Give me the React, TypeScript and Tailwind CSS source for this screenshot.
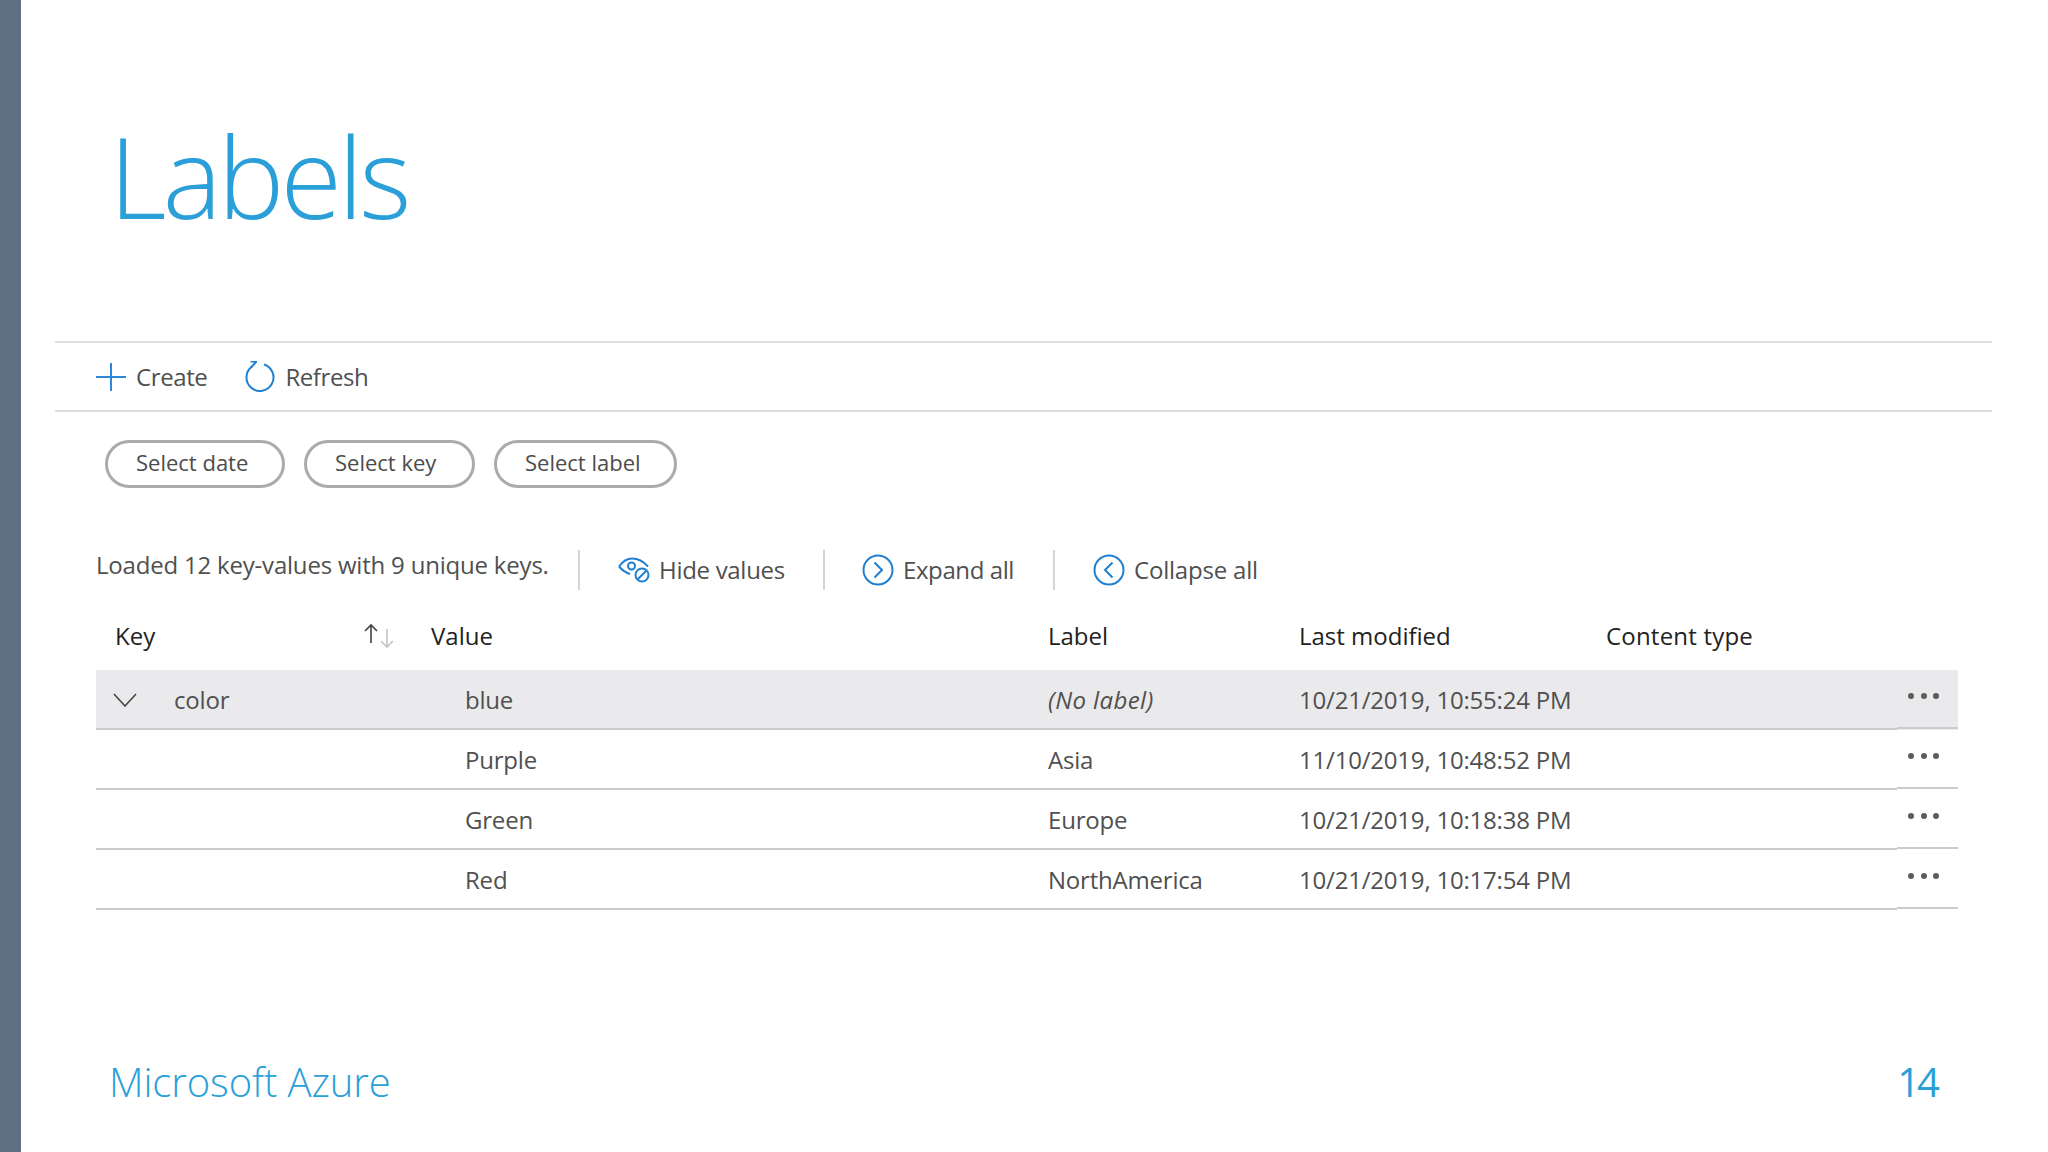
const font = "font-['Open_Sans','Liberation_Sans',sans-serif]"

type Row = {
  value: string
  label: string
  modified: string
}

const rows: Row[] = [
  { value: 'blue', label: '(No label)', modified: '10/21/2019, 10:55:24 PM' },
  { value: 'Purple', label: 'Asia', modified: '11/10/2019, 10:48:52 PM' },
  { value: 'Green', label: 'Europe', modified: '10/21/2019, 10:18:38 PM' },
  { value: 'Red', label: 'NorthAmerica', modified: '10/21/2019, 10:17:54 PM' },
]

function PlusIcon() {
  return (
    <svg width="30" height="30" viewBox="0 0 30 30" fill="none" stroke="#2b88d8" strokeWidth="2">
      <path d="M0 15H30M15 1V29" />
    </svg>
  )
}

function RefreshIcon() {
  return (
    <svg width="32" height="32" viewBox="0 0 32 32" fill="none" stroke="#1f7fd0" strokeWidth="2">
      <path d="M20 3.5A13.5 13.5 0 1 1 8 5.5" />
      <path d="M6.5 0.5H13M12.5 0.5L7 6.5" />
    </svg>
  )
}

function HideIcon() {
  return (
    <svg width="32" height="26" viewBox="0 0 32 26" fill="none" stroke="#1f7fd0" strokeWidth="2">
      <path d="M1 9.5C5 4 9.5 1.5 14 1.5C20 1.5 26 5 30 9.5" />
      <path d="M1 9.5C4 13 7.5 15.5 12 17" />
      <circle cx="13.5" cy="9" r="3.5" />
      <circle cx="24" cy="18" r="6.5" />
      <path d="M19.5 22.5L28.5 13.5" />
    </svg>
  )
}

function CircleChevron({ dir }: { dir: 'left' | 'right' }) {
  return (
    <svg width="32" height="32" viewBox="0 0 32 32" fill="none" stroke="#1f7fd0" strokeWidth="2">
      <circle cx="16" cy="16" r="14.5" />
      <path d={dir === 'right' ? 'M12.5 8.5L20 16L12.5 23.5' : 'M19.5 8.5L12 16L19.5 23.5'} />
    </svg>
  )
}

function SortIcon() {
  return (
    <svg width="32" height="26" viewBox="0 0 32 26" fill="none" strokeWidth="1.6">
      <path d="M8 20V2M2 8L8 2L14 8" stroke="#444444" />
      <path d="M24 6V24M18 18L24 24L30 18" stroke="#c4c4c4" />
    </svg>
  )
}

function Chevron() {
  return (
    <svg width="24" height="14" viewBox="0 0 24 14" fill="none" stroke="#444444" strokeWidth="1.6">
      <path d="M1 1L12 13L23 1" />
    </svg>
  )
}

function Dots() {
  return (
    <div className="flex gap-[6.5px] ml-[11px] mb-[5px]">
      <span className="w-[6px] h-[6px] rounded-full bg-[#5c5c5c]" />
      <span className="w-[6px] h-[6px] rounded-full bg-[#5c5c5c]" />
      <span className="w-[6px] h-[6px] rounded-full bg-[#5c5c5c]" />
    </div>
  )
}

function Pill({ text, width }: { text: string; width: string }) {
  return (
    <button
      type="button"
      className={`h-[48px] ${width} rounded-full border-[3px] border-[#ababab] text-[22px] text-[#4c4c4c] text-left pl-[28px] pb-[3px]`}
    >
      {text}
    </button>
  )
}

export default function App() {
  return (
    <div className={`w-[2048px] h-[1152px] flex bg-white overflow-hidden ${font}`}>
      <div className="w-[21px] shrink-0 bg-[#5f6f82]" />
      <main className="flex-1 flex flex-col">
        <div className="h-[341px] pl-[88px] pt-[111px]">
          <h1 className="text-[112px] leading-[130px] font-light text-[#2a9fd8] tracking-[-4px]">Labels</h1>
        </div>

        <div className="ml-[34px] w-[1937px] h-[71px] border-y-2 border-[#dedede] pl-[41px] flex items-center text-[24px] text-[#505050] tracking-[-0.4px]">
          <PlusIcon />
          <span className="ml-[10px]">Create</span>
          <span className="ml-[37px]"><RefreshIcon /></span>
          <span className="ml-[9px]">Refresh</span>
        </div>

        <div className="ml-[84px] mt-[28px] flex gap-[19px]">
          <Pill text="Select date" width="w-[180px]" />
          <Pill text="Select key" width="w-[171px]" />
          <Pill text="Select label" width="w-[183px]" />
        </div>

        <div className="ml-[75px] mt-[62px] h-[40px] flex items-center text-[24px] text-[#505050] tracking-[-0.2px]">
          <span className="w-[482px] pb-[10px]">Loaded 12 key-values with 9 unique keys.</span>
          <span className="w-[2px] h-[40px] bg-[#d4d4d4]" />
          <span className="ml-[38px]"><HideIcon /></span>
          <span className="ml-[9px] w-[164px] tracking-[-0.3px]">Hide values</span>
          <span className="w-[2px] h-[40px] bg-[#d4d4d4]" />
          <span className="ml-[37px]"><CircleChevron dir="right" /></span>
          <span className="ml-[9px] w-[150px] tracking-[-0.4px]">Expand all</span>
          <span className="w-[2px] h-[40px] bg-[#d4d4d4]" />
          <span className="ml-[38px]"><CircleChevron dir="left" /></span>
          <span className="ml-[9px]">Collapse all</span>
        </div>

        <div className="ml-[75px] mt-[22px] w-[1862px] text-[24px] tracking-[-0.2px]">
          <div className="h-[58px] pb-[11px] grid grid-cols-[335px_617px_251px_307px_1fr] items-center font-medium text-[#222222] tracking-[0px]">
            <div className="flex items-center pl-[19px] pr-[36px] justify-between">
              <span>Key</span>
              <SortIcon />
            </div>
            <span>Value</span>
            <span>Label</span>
            <span>Last modified</span>
            <span className="tracking-[0.2px]">Content type</span>
          </div>

          {rows.map((row, i) => (
            <div key={row.modified} className={`h-[60px] flex ${i === 0 ? 'bg-[#eae9eb]' : ''}`}>
              <div className="w-[1801px] h-[60px] pt-[1px] border-b-2 border-[#cbcbcb] grid grid-cols-[335px_617px_251px_1fr] items-center text-[#505050]">
                <div className="flex items-center">
                  {i === 0 && (
                    <>
                      <span className="ml-[17px] flex"><Chevron /></span>
                      <span className="ml-[37px]">color</span>
                    </>
                  )}
                </div>
                <span className="pl-[34px]">{row.value}</span>
                <span className={i === 0 ? 'italic tracking-[0.4px]' : ''}>{row.label}</span>
                <span>{row.modified}</span>
              </div>
              <div className="w-[61px] h-[59px] border-b-2 border-[#cbcbcb] flex items-center">
                <Dots />
              </div>
            </div>
          ))}
        </div>

        <div className="ml-[88px] mt-[144px] w-[1828px] flex justify-between items-center text-[#2a9fd8] text-[40px] leading-[56px] font-light">
          <span className="tracking-[-0.1px]">Microsoft Azure</span>
          <span className="tracking-[-3px] font-normal">14</span>
        </div>
      </main>
    </div>
  )
}
